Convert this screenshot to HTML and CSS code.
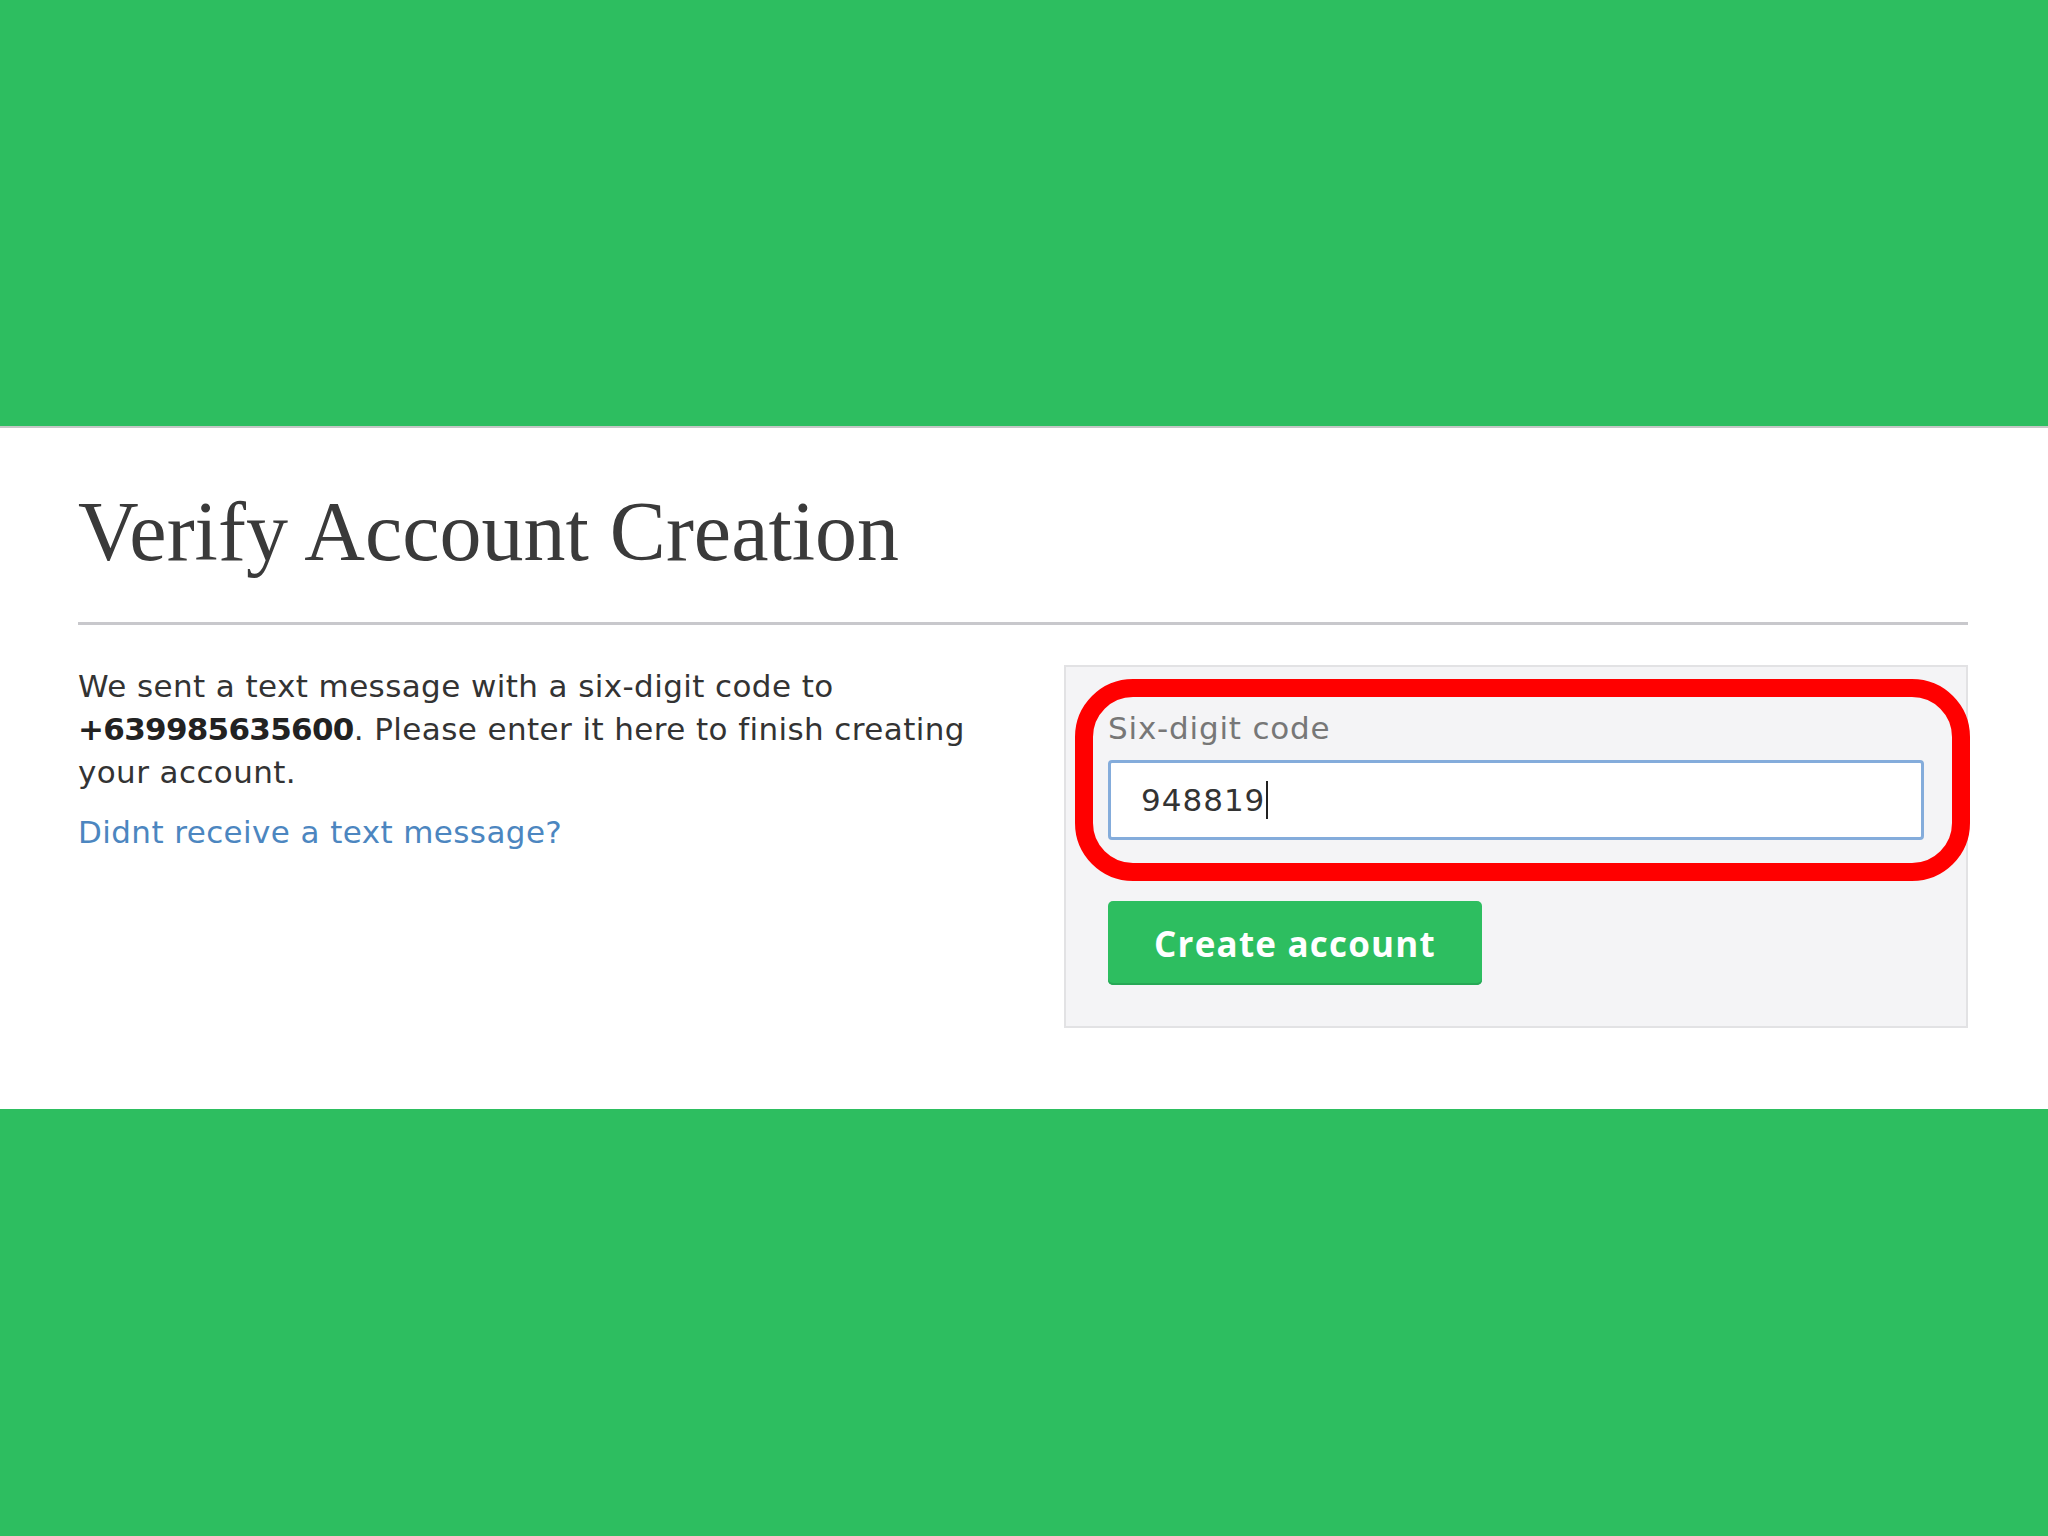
FILE: index.html
```html
<!DOCTYPE html>
<html lang="en">
<head>
  <meta charset="UTF-8">
  <title>Verify Account Creation</title>
  <link rel="stylesheet" href="styles.css">
</head>
<body>

  <div class="band top"></div>

  <div class="page">
    <h1>Verify Account Creation</h1>
    <hr>

    <div class="row">
      <div class="info">
        <p>We sent a text message with a six-digit code to <strong>+639985635600</strong>. Please enter it here to finish creating your account.</p>
        <a href="#" class="resend">Didnt receive a text message?</a>
      </div>

      <form class="panel" onsubmit="return false">
        <div class="highlight"></div>
        <label for="code">Six-digit code</label>
        <div class="field">
          <span class="value">948819</span><span class="caret"></span>
        </div>
        <button type="submit" class="create">Create account</button>
      </form>
    </div>
  </div>

  <div class="band bottom"></div>

</body>
</html>
```

FILE: styles.css
```css
html, body {
  margin: 0;
  height: 100%;
}

body {
  display: flex;
  flex-direction: column;
  background: #2dbe60;
  font-family: "DejaVu Sans", "Open Sans", sans-serif;
  color: #333;
}

.band {
  background: #2dbe60;
}

.top {
  height: 426px;
  border-bottom: 2px solid #c4c8c6;
}

.bottom {
  flex: 1;
}

.page {
  background: #fff;
  height: 681px;
  padding: 54px 80px 0 78px;
  box-sizing: border-box;
}

h1 {
  font-family: "Liberation Serif", serif;
  font-weight: normal;
  font-size: 84px;
  line-height: 100px;
  margin: 0 0 40px;
  color: #3a3a3a;
}

hr {
  border: none;
  border-top: 3px solid #c8c8cc;
  margin: 0 0 40px;
}

.row {
  display: flex;
  gap: 70px;
}

.info {
  flex: 1;
  font-size: 31px;
  letter-spacing: 0.4px;
}

.info p {
  margin: 0 0 17px;
  line-height: 43px;
}

.info strong {
  font-weight: bold;
  letter-spacing: -0.7px;
  color: #222;
}

.resend {
  color: #4c86c0;
  text-decoration: none;
  line-height: 43px;
}

.panel {
  position: relative;
  width: 904px;
  height: 363px;
  box-sizing: border-box;
  background: #f4f4f6;
  border: 2px solid #e2e2e4;
  padding: 40px 42px 0;
}

.panel label {
  display: block;
  font-size: 31px;
  letter-spacing: 0.8px;
  color: #777;
  line-height: 42px;
  margin-bottom: 11px;
}

.field {
  height: 80px;
  box-sizing: border-box;
  background: #fff;
  border: 3px solid #84acdb;
  border-radius: 4px;
  padding: 0 30px;
  display: flex;
  align-items: center;
  font-size: 31px;
  letter-spacing: 1px;
  color: #333;
}

.caret {
  display: inline-block;
  width: 2px;
  height: 38px;
  background: #222;
  margin-left: 1px;
}

.create {
  display: block;
  margin-top: 61px;
  width: 374px;
  height: 84px;
  border: none;
  border-radius: 5px;
  background: #2dbe60;
  box-shadow: inset 0 -2px 0 #27a856;
  color: #fff;
  font-family: "Open Sans", "DejaVu Sans", sans-serif;
  font-weight: bold;
  font-size: 35px;
  letter-spacing: 1.2px;
  cursor: pointer;
}

.highlight {
  position: absolute;
  left: 9px;
  top: 12px;
  width: 895px;
  height: 202px;
  box-sizing: border-box;
  border: 18px solid #ff0000;
  border-radius: 58px;
  pointer-events: none;
}
```
